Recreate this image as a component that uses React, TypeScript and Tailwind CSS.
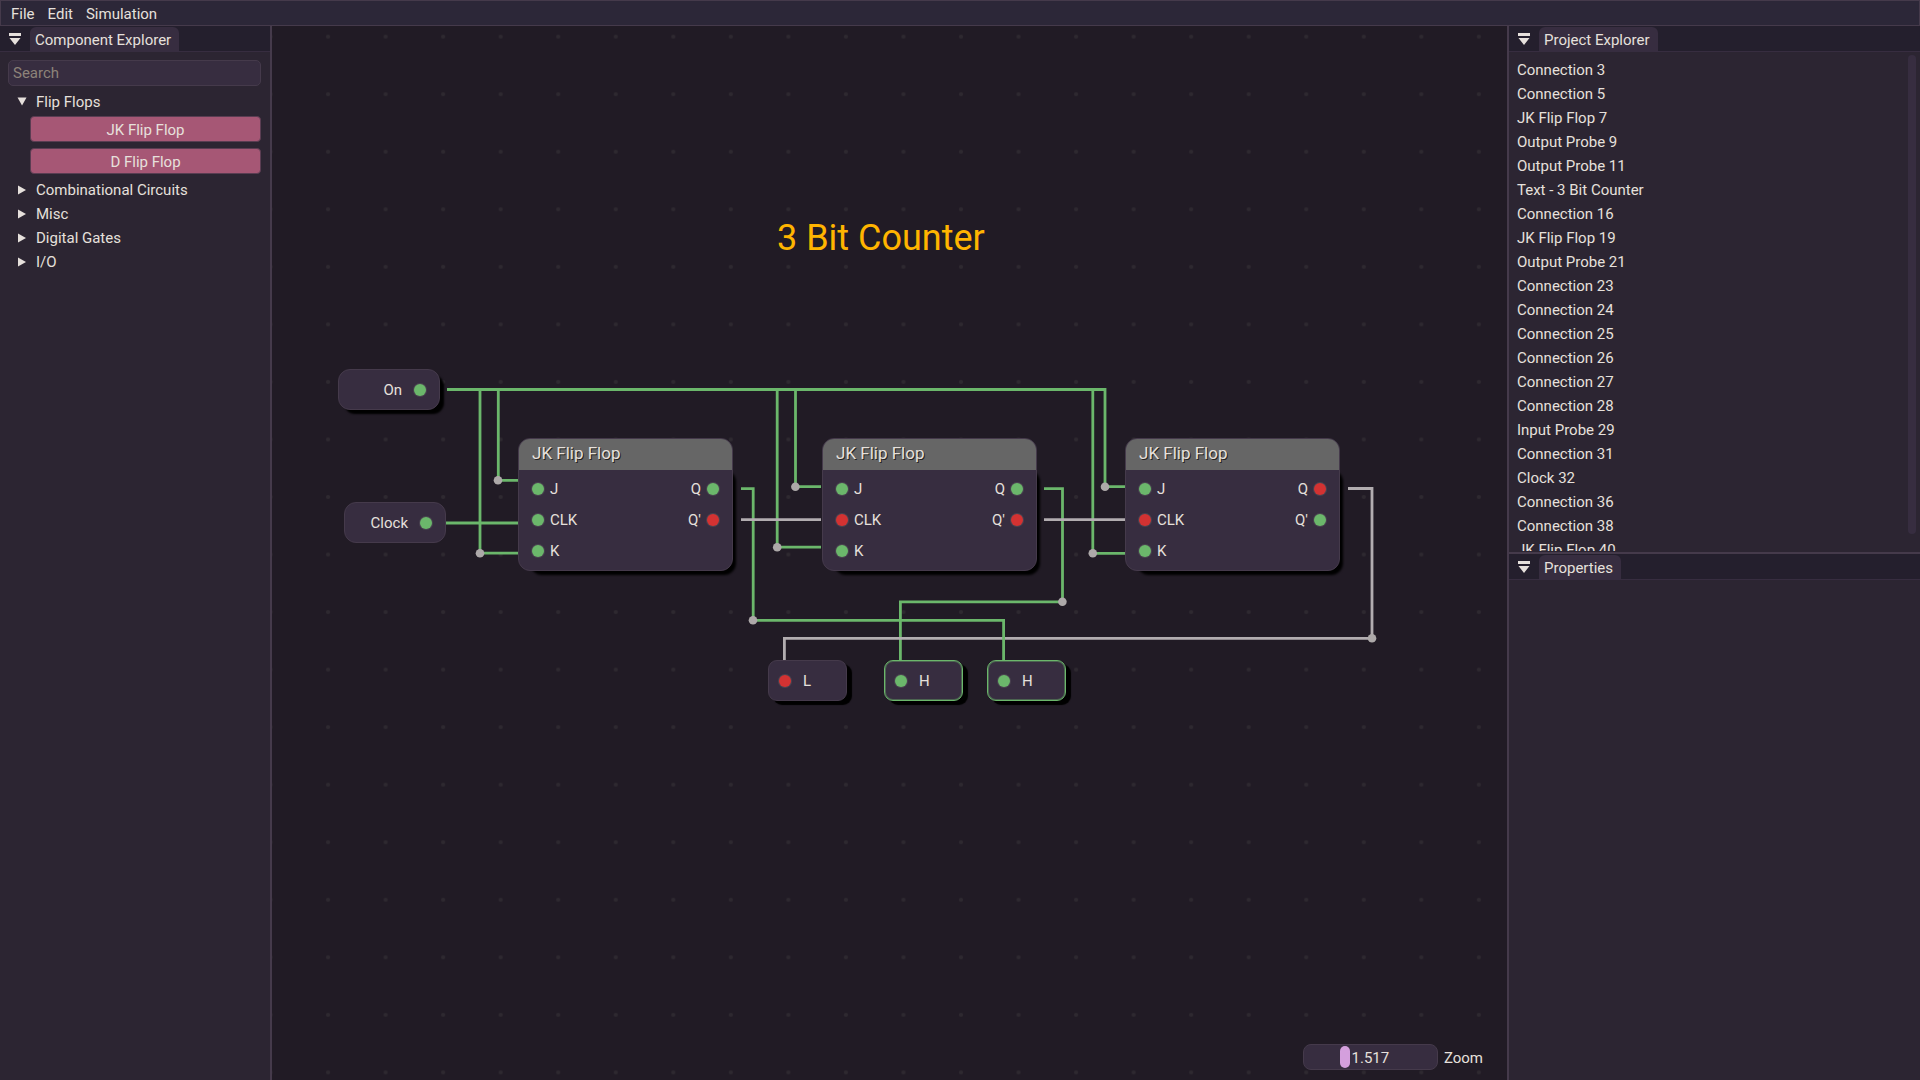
import { useState } from "react";
import type { ReactNode } from "react";

type Level = "high" | "low";

const GREEN = "#6bb76b";
const GRAY = "#b2adb0";

const projectItems = [
  "Connection 3",
  "Connection 5",
  "JK Flip Flop 7",
  "Output Probe 9",
  "Output Probe 11",
  "Text - 3 Bit Counter",
  "Connection 16",
  "JK Flip Flop 19",
  "Output Probe 21",
  "Connection 23",
  "Connection 24",
  "Connection 25",
  "Connection 26",
  "Connection 27",
  "Connection 28",
  "Input Probe 29",
  "Connection 31",
  "Clock 32",
  "Connection 36",
  "Connection 38",
  "JK Flip Flop 40",
];

// Wire routes in canvas coordinates, in drawing order.
const wires: { d: string; color: string }[] = [
  { d: "M208 363.5V527.2H246", color: GREEN },
  { d: "M226.3 363.5V454.4H246", color: GREEN },
  { d: "M174 497H246", color: GREEN },
  { d: "M505.2 363.5V521.2H549", color: GREEN },
  { d: "M523.5 363.5V460.7H549", color: GREEN },
  { d: "M820.8 363.5V527.3H853", color: GREEN },
  { d: "M175 363.5H833V460.7H853", color: GREEN },
  { d: "M772 462.6H790.5V575.8H628.4V634", color: GREEN },
  { d: "M1076 462.5H1100V612.3H512.4V634", color: GRAY },
  { d: "M469 462.6H481.2V594.3H731.6V634", color: GREEN },
  { d: "M469 493.7H549", color: GRAY },
  { d: "M772 493.7H853", color: GRAY },
];

const joints = [
  [208, 527.3],
  [226, 454.3],
  [505.2, 521.2],
  [523.4, 460.7],
  [820.8, 527.3],
  [833, 460.7],
  [481, 594.2],
  [790.4, 575.8],
  [1100, 612.3],
];

const flipFlops: { x: number; y: number; clk: Level; q: Level; qn: Level }[] = [
  { x: 246, y: 412, clk: "high", q: "high", qn: "low" },
  { x: 550, y: 412, clk: "low", q: "high", qn: "low" },
  { x: 853, y: 412, clk: "low", q: "low", qn: "high" },
];

const probes: { x: number; y: number; level: Level }[] = [
  { x: 496, y: 634, level: "low" },
  { x: 612, y: 634, level: "high" },
  { x: 715, y: 634, level: "high" },
];

function Pin({ level }: { level: Level }) {
  return (
    <span
      className={`size-3 shrink-0 rounded-full ring-1 ring-[#4a4350] ${level === "high" ? "bg-[#6bb76b]" : "bg-[#d33232]"}`}
    />
  );
}

function PanelHeader({ title }: { title: string }) {
  return (
    <div className="flex h-[26px] shrink-0 items-end border-b border-[#372d40] bg-[#241f2d]">
      <button aria-label="Window menu" className="flex h-6 w-[30px] items-center justify-center">
        <svg width="12" height="12" viewBox="0 0 12 12" fill="#e6e0dc">
          <path d="M0 0H12V3H0ZM0.5 5H11.5L6 12Z" />
        </svg>
      </button>
      <button className="h-6 rounded-t-md bg-[#372d40] pt-px pr-2 pl-[5px]">{title}</button>
    </div>
  );
}

function TreeNode({ label, open = false, children }: { label: string; open?: boolean; children?: ReactNode }) {
  return (
    <li>
      <button aria-expanded={open} className="flex h-6 w-full items-center gap-[9px] pl-[9px] text-left">
        <svg width="10" height="10" viewBox="0 0 10 10" fill="#e6e0dc">
          <path d={open ? "M0.5 0.5H9.5L5 8.5Z" : "M1 0.5V9.5L9 5Z"} />
        </svg>
        {label}
      </button>
      {children}
    </li>
  );
}

function FlipFlop({ x, y, clk, q, qn }: (typeof flipFlops)[number]) {
  return (
    <div className="absolute w-[215px]" style={{ left: x, top: y }}>
      <div className="absolute top-8 -right-[3px] -bottom-1 left-3 rounded-xl bg-black blur-[1px]" />
      <div className="relative h-[133px] overflow-hidden rounded-xl border border-[#453a4b] bg-[#372d40]">
        <div className="h-[31px] bg-[#666666] pl-[13px] text-[17px] leading-[28px] [text-shadow:1px_1px_0_#222]">
          JK Flip Flop
        </div>
        <div className="flex justify-between px-[13px] pt-[3px]">
          <ul>
            <li className="flex h-[31px] items-center gap-[6px]"><Pin level="high" />J</li>
            <li className="flex h-[31px] items-center gap-[6px]"><Pin level={clk} />CLK</li>
            <li className="flex h-[31px] items-center gap-[6px]"><Pin level="high" />K</li>
          </ul>
          <ul>
            <li className="flex h-[31px] items-center justify-end gap-[6px]">Q<Pin level={q} /></li>
            <li className="flex h-[31px] items-center justify-end gap-[6px]">Q'<Pin level={qn} /></li>
          </ul>
        </div>
      </div>
    </div>
  );
}

function Canvas() {
  const [zoom, setZoom] = useState(1.517);
  return (
    <main className="relative min-w-0 flex-1 overflow-hidden bg-[#211b25]">
      <svg className="absolute inset-0 size-full" aria-hidden="true">
        <defs>
          <pattern id="grid" x="27.3" y="-18.1" width="57.54" height="57.54" patternUnits="userSpaceOnUse">
            <circle cx="28.77" cy="28.77" r="2.1" fill="#2e2930" />
          </pattern>
        </defs>
        <rect width="100%" height="100%" fill="url(#grid)" />
        {wires.map((w) => (
          <path key={w.d} d={w.d} fill="none" stroke={w.color} strokeWidth="2.8" />
        ))}
        {joints.map(([cx, cy]) => (
          <circle key={`${cx}-${cy}`} cx={cx} cy={cy} r="4.3" fill="#ada9a9" />
        ))}
      </svg>

      <h1 className="absolute top-[191px] left-[505px] text-[36px] leading-[42px] whitespace-nowrap text-[#ffb400]">
        3 Bit Counter
      </h1>

      <div className="absolute top-[343px] left-[66px] flex h-[41px] w-[102px] items-center justify-end gap-3 rounded-xl border border-[#453a4b] bg-[#372d40] pr-[13px] shadow-[5px_5px_2px_-1px_#000]">
        On
        <Pin level="high" />
      </div>
      <div className="absolute top-[476px] left-[72px] flex h-[41px] w-[102px] items-center justify-end gap-3 rounded-xl border border-[#453a4b] bg-[#372d40] pr-[13px]">
        Clock
        <Pin level="high" />
      </div>

      {flipFlops.map((f) => (
        <FlipFlop key={f.x} {...f} />
      ))}

      {probes.map((p) => (
        <div
          key={p.x}
          className={`absolute flex h-[41px] w-[79px] items-center gap-3 rounded-[9px] border bg-[#372d40] pl-[10px] shadow-[5px_4px_1px_0_#000] ${p.level === "high" ? "border-[#6bb76b] inset-ring inset-ring-[#6bb76b]/40" : "border-[#453a4b]"}`}
          style={{ left: p.x, top: p.y }}
        >
          <Pin level={p.level} />
          {p.level === "high" ? "H" : "L"}
        </div>
      ))}

      <div className="absolute right-6 bottom-[10px] flex items-center gap-[6px]">
        <div className="relative h-[26px] w-[135px] rounded-lg border border-[#453a4b] bg-[#372d40] px-[2px]">
          <input
            id="zoom"
            type="range"
            min="0.5"
            max="4"
            step="any"
            value={zoom}
            onChange={(e) => setZoom(Number(e.target.value))}
            className="block h-6 w-full appearance-none bg-transparent outline-none [&::-webkit-slider-thumb]:h-[22px] [&::-webkit-slider-thumb]:w-[10px] [&::-webkit-slider-thumb]:appearance-none [&::-webkit-slider-thumb]:rounded-[5px] [&::-webkit-slider-thumb]:bg-[#d49fdd]"
          />
          <output
            htmlFor="zoom"
            className="pointer-events-none absolute inset-0 pt-px text-center leading-6"
          >
            {zoom.toFixed(3)}
          </output>
        </div>
        <label htmlFor="zoom" className="pt-px">Zoom</label>
      </div>
    </main>
  );
}

export default function App() {
  return (
    <div className="flex h-screen flex-col overflow-hidden bg-[#2c2532] font-['Roboto',sans-serif] text-[15px] leading-6 text-[#e6e0dc]">
      <nav className="flex h-[26px] shrink-0 items-center gap-px border border-[#453a4b] bg-[#2c2738] pl-1">
        <button className="h-6 px-[6px] pt-px">File</button>
        <button className="h-6 px-[6px] pt-px">Edit</button>
        <button className="h-6 px-[6px] pt-px">Simulation</button>
      </nav>

      <div className="flex min-h-0 flex-1">
        <aside className="flex w-[272px] shrink-0 flex-col border-r-2 border-[#453a4b]">
          <PanelHeader title="Component Explorer" />
          <div className="pt-2 pr-[9px] pl-2">
            <input
              type="search"
              aria-label="Search"
              placeholder="Search"
              className="block h-[26px] w-full rounded-[5px] border border-[#453a4b] bg-[#372d40] px-1 outline-none placeholder:text-[#8d8379]"
            />
            <ul className="pt-1">
              <TreeNode label="Flip Flops" open>
                <div className="flex flex-col gap-[6px] pt-[2px] pb-1 pl-[22px]">
                  <button className="h-[26px] rounded border border-[#5a3d52] bg-[#a65775] pt-px leading-6">JK Flip Flop</button>
                  <button className="h-[26px] rounded border border-[#5a3d52] bg-[#a65775] pt-px leading-6">D Flip Flop</button>
                </div>
              </TreeNode>
              <TreeNode label="Combinational Circuits" />
              <TreeNode label="Misc" />
              <TreeNode label="Digital Gates" />
              <TreeNode label="I/O" />
            </ul>
          </div>
        </aside>

        <Canvas />

        <aside className="flex w-[413px] shrink-0 flex-col border-l-2 border-[#453a4b]">
          <section className="flex min-h-0 flex-1 flex-col">
            <PanelHeader title="Project Explorer" />
            <div className="relative mb-px min-h-0 flex-1">
              <ul className="h-full overflow-y-auto px-2 pt-[6px] [scrollbar-width:none]">
                {projectItems.map((item) => (
                  <li key={item} className="h-6">{item}</li>
                ))}
              </ul>
              <div className="absolute top-[3px] right-1 bottom-[17px] w-2 rounded-full bg-[#372d40]" />
            </div>
          </section>
          <div className="h-[2px] shrink-0 bg-[#453a4b]" />
          <section className="min-h-0 flex-1">
            <PanelHeader title="Properties" />
          </section>
        </aside>
      </div>
    </div>
  );
}
